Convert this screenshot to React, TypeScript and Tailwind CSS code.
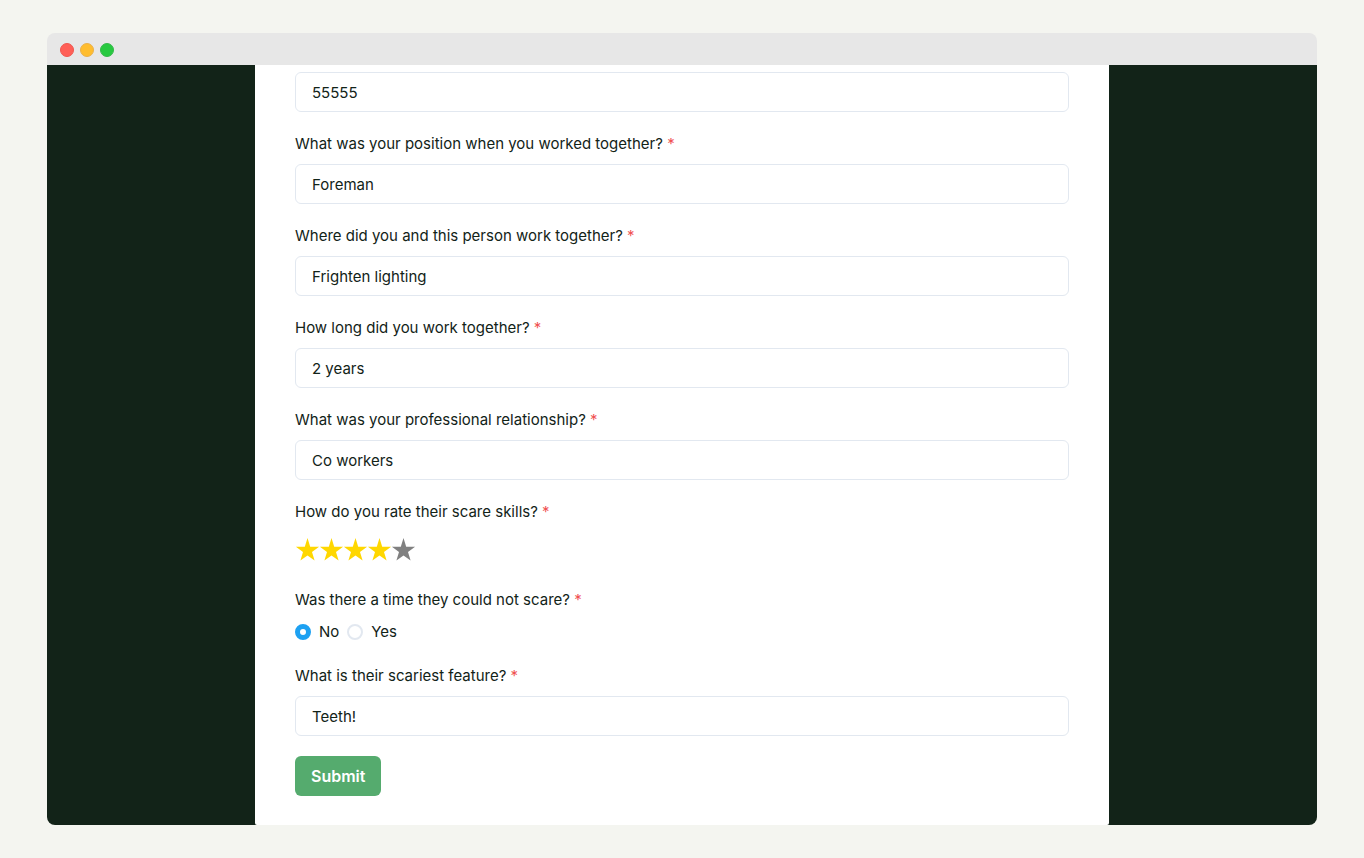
import { useState } from "react";

const STAR_POINTS =
  "12.5,0 15.2,8.7 24.1,8.7 17,14 19.6,22.6 12.5,17.4 5.4,22.6 8,14 0.9,8.7 9.8,8.7";

const workFields = [
  {
    id: "position",
    label: "What was your position when you worked together?",
    value: "Foreman",
  },
  {
    id: "workplace",
    label: "Where did you and this person work together?",
    value: "Frighten lighting",
  },
  {
    id: "duration",
    label: "How long did you work together?",
    value: "2 years",
  },
  {
    id: "relationship",
    label: "What was your professional relationship?",
    value: "Co workers",
  },
];

function Required() {
  return <span className="text-[#f05252]"> *</span>;
}

const inputClass =
  "h-10 w-full rounded-md border border-[#e2e8f0] bg-white px-4 outline-none focus:border-[#1da1f2]";

function TextField({ id, label, value }: { id: string; label: string; value: string }) {
  return (
    <div className="flex flex-col gap-2">
      <label htmlFor={id} className="leading-6">
        {label}
        <Required />
      </label>
      <input id={id} type="text" defaultValue={value} className={inputClass} />
    </div>
  );
}

function StarRating() {
  const [rating, setRating] = useState(4);

  return (
    <fieldset>
      <legend className="mb-2 leading-6">
        How do you rate their scare skills?
        <Required />
      </legend>
      <div className="flex h-9 items-center">
        {[1, 2, 3, 4, 5].map((star) => (
          <label key={star} className="relative cursor-pointer">
            <input
              type="radio"
              name="rating"
              value={star}
              aria-label={`${star} stars`}
              checked={rating === star}
              onChange={() => setRating(star)}
              className="sr-only"
            />
            <svg viewBox="0 0 24 24" className="size-6 overflow-visible" aria-hidden="true">
              <polygon points={STAR_POINTS} fill={star <= rating ? "#ffd700" : "#808080"} />
            </svg>
          </label>
        ))}
      </div>
    </fieldset>
  );
}

function ScareRadios() {
  return (
    <fieldset>
      <legend className="mb-2 leading-6">
        Was there a time they could not scare?
        <Required />
      </legend>
      <div className="flex h-6 items-center gap-2">
        {["No", "Yes"].map((option) => (
          <label key={option} className="flex items-center gap-2">
            <input
              type="radio"
              name="could-not-scare"
              value={option}
              defaultChecked={option === "No"}
              className="size-4 appearance-none rounded-full border-2 border-[#e2e8f0] bg-white checked:border-5 checked:border-[#1da1f2]"
            />
            {option}
          </label>
        ))}
      </div>
    </fieldset>
  );
}

export default function App() {
  return (
    <div className="flex min-h-screen flex-col bg-[#f4f5f0] px-[47px] py-[33px] font-['Inter',sans-serif] text-[15px] text-[#122318]">
      <div className="flex flex-1 flex-col overflow-hidden rounded-lg">
        <div className="flex h-8 items-center gap-[6px] bg-[#e7e7e7] px-[13px] pt-[2px]">
          <span className="size-[14px] rounded-full border border-[#f0564e] bg-[#ff5f57]" />
          <span className="size-[14px] rounded-full border border-[#eab04a] bg-[#ffbd2e]" />
          <span className="size-[14px] rounded-full border border-[#35b84a] bg-[#28c940]" />
        </div>
        <div className="flex flex-1 justify-center bg-[#122318]">
          <main className="w-full max-w-[854px] rounded-b-xs bg-white px-10 pt-[7px] pb-[29px]">
            <form className="flex flex-col gap-5" onSubmit={(e) => e.preventDefault()}>
              <input type="text" aria-label="Zip code" defaultValue="55555" className={inputClass} />
              {workFields.map((field) => (
                <TextField key={field.id} {...field} />
              ))}
              <StarRating />
              <ScareRadios />
              <TextField id="feature" label="What is their scariest feature?" value="Teeth!" />
              <button
                type="submit"
                className="h-10 self-start rounded-md bg-[#55ab6e] px-4 text-base font-semibold text-white"
              >
                Submit
              </button>
            </form>
          </main>
        </div>
      </div>
    </div>
  );
}
